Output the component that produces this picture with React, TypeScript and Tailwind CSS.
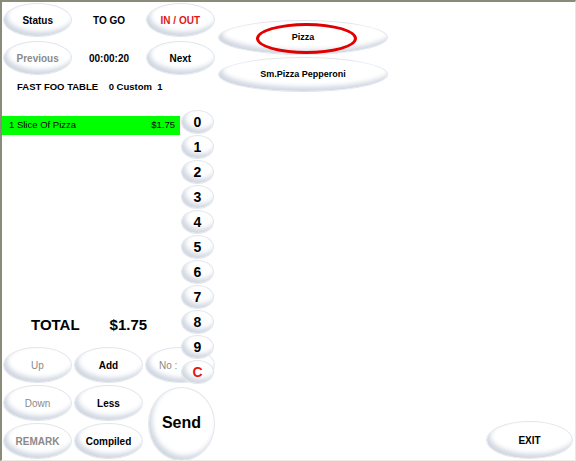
import React from "react";

const KEYS = ["0", "1", "2", "3", "4", "5", "6", "7", "8", "9", "C"];

function Pill({ children, className = "" }: { children?: React.ReactNode; className?: string }) {
  return (
    <div
      className={`flex items-center justify-center rounded-[50%] bg-white border border-[#e2e6ec] shadow-[inset_3px_-4px_5px_#d0d7e1] font-bold ${className}`}
    >
      {children}
    </div>
  );
}

export default function App() {
  return (
    <div className="w-[576px] h-[461px] bg-white border-t-2 border-l-2 border-r border-b border-t-[#8b8b7b] border-l-[#8b8b7b] border-r-[#e6e6e6] border-b-[#eeeae0] flex overflow-hidden font-['Liberation_Sans',Arial,sans-serif] text-black">
      {/* left column */}
      <div className="w-[214px] flex flex-col shrink-0">
        <div className="grid grid-cols-3 h-[36px]">
          <Pill className="m-[1px] text-[10px]">Status</Pill>
          <div className="flex items-center justify-center text-[10px] font-bold">TO GO</div>
          <Pill className="m-[1px] text-[10px] text-[#e01a1a]">IN / OUT</Pill>
        </div>
        <div className="grid grid-cols-3 h-[36px] mt-[2px]">
          <Pill className="m-[1px] text-[10px] text-[#8a8a8a]">Previous</Pill>
          <div className="flex items-center justify-center text-[10px] font-bold">00:00:20</div>
          <Pill className="m-[1px] text-[10px]">Next</Pill>
        </div>
        <div className="h-[34px] pt-[5px] pl-[15px] text-[9.5px] font-bold leading-[12px] whitespace-pre">
          FAST FOO TABLE    0 Custom  1
        </div>

        <div className="flex h-[236px]">
          <div className="w-[178px] flex flex-col">
            <div className="mt-[6px] h-[19px] bg-[#00ff00] flex items-center justify-between pl-[7px] pr-[5px] text-[9.5px]">
              <span>1 Slice Of Pizza</span>
              <span>$1.75</span>
            </div>
            <div className="flex-1" />
            <div className="h-[42px] flex items-center pl-[29px] gap-[30px] text-[15px] font-bold">
              <span>TOTAL</span>
              <span>$1.75</span>
            </div>
          </div>
          <div className="w-[36px] flex flex-col relative z-10">
            {KEYS.map((k) => (
              <Pill
                key={k}
                className={`shrink-0 w-[33px] h-[24px] ml-[1px] mb-[1px] text-[14px] ${k === "C" ? "text-[#e01a1a]" : ""}`}
              >
                {k}
              </Pill>
            ))}
          </div>
        </div>

        <div className="grid grid-cols-[71px_71px_72px] grid-rows-[38px_38px_38px]">
          <Pill className="m-[1px] text-[10px] text-[#8a8a8a] font-normal">Up</Pill>
          <Pill className="m-[1px] text-[10px]">Add</Pill>
          <Pill className="m-[1px] text-[10px] text-[#8a8a8a] font-normal justify-start pl-[13px]">No :</Pill>
          <Pill className="m-[1px] text-[10px] text-[#8a8a8a] font-normal">Down</Pill>
          <Pill className="m-[1px] text-[10px]">Less</Pill>
          <Pill className="row-span-2 ml-[4px] mr-[1px] mt-[3px] mb-[-1px] pb-[3px] text-[16px]">Send</Pill>
          <Pill className="m-[1px] text-[10px] text-[#8a8a8a]">REMARK</Pill>
          <Pill className="m-[1px] text-[10px]">Compiled</Pill>
        </div>
      </div>

      {/* right area */}
      <div className="flex-1 flex flex-col pl-[2px] pr-[2px] pb-[1px]">
        <div className="mt-[18px] w-[170px] h-[35px] relative">
          <Pill className="w-full h-full text-[9px]">Pizza</Pill>
          <div className="absolute left-[38px] top-[3px] w-[101px] h-[31px] rounded-[50%] border-[3px] border-[#e00000]" />
        </div>
        <Pill className="mt-[2px] w-[170px] h-[35px] text-[9px]">Sm.Pizza Pepperoni</Pill>
        <div className="flex-1" />
        <div className="flex justify-end">
          <Pill className="w-[87px] h-[38px] text-[10px]">EXIT</Pill>
        </div>
      </div>
    </div>
  );
}
